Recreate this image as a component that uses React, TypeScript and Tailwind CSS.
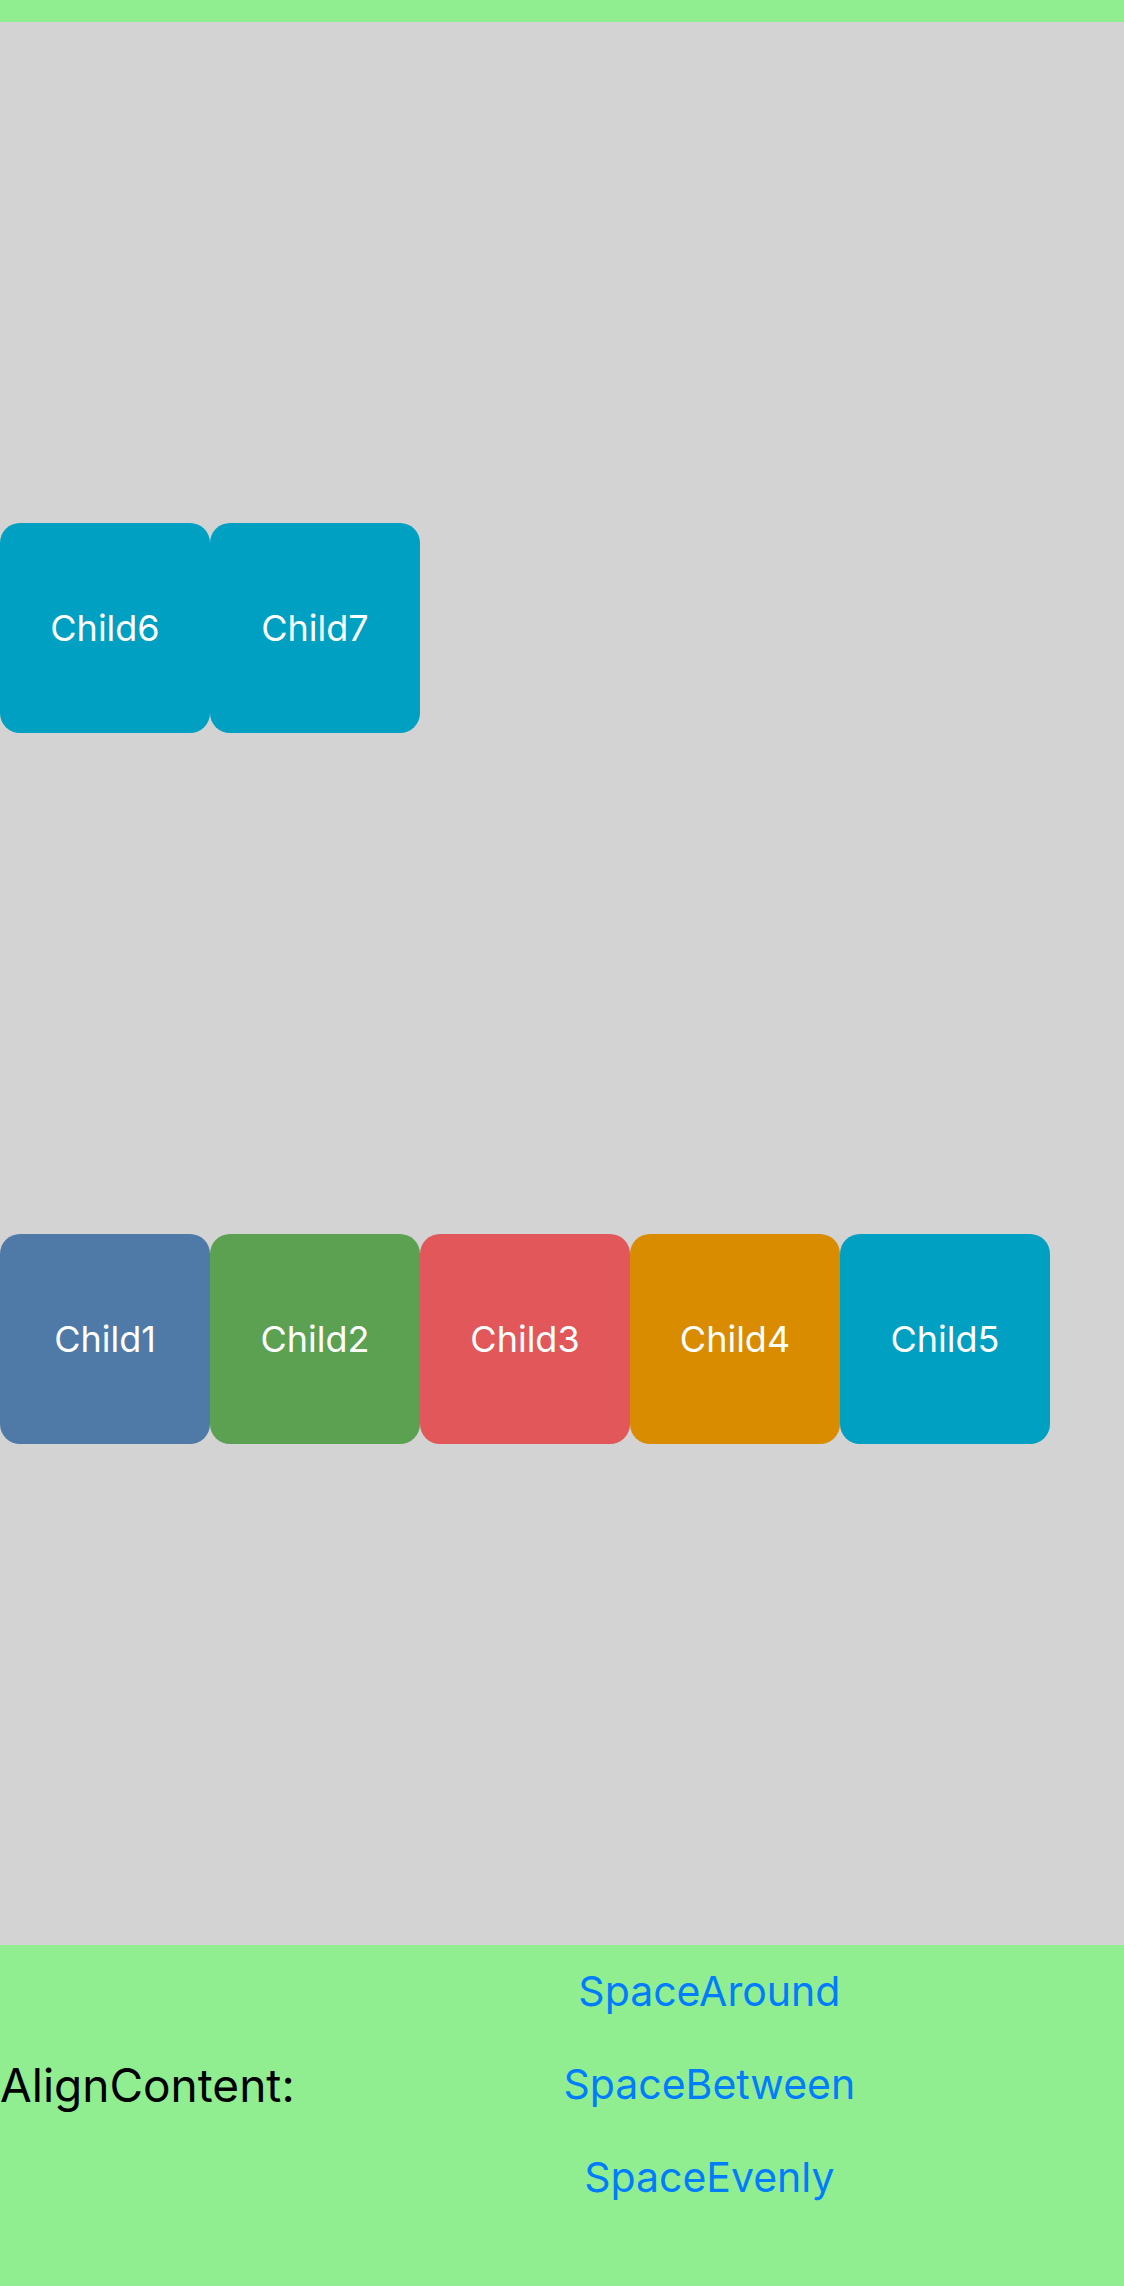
const boxes = [
  { label: "Child1", color: "bg-[#4f7aa7]" },
  { label: "Child2", color: "bg-[#5ba151]" },
  { label: "Child3", color: "bg-[#e1575a]" },
  { label: "Child4", color: "bg-[#d98c00]" },
  { label: "Child5", color: "bg-[#00a0c3]" },
  { label: "Child6", color: "bg-[#00a0c3]" },
  { label: "Child7", color: "bg-[#00a0c3]" },
];

const options = ["SpaceAround", "SpaceBetween", "SpaceEvenly"];

export default function App() {
  return (
    <div className="flex h-[2286px] w-[1124px] flex-col bg-[#90ee90] pt-[22px] font-['Inter',sans-serif]">
      {/* wrap-reverse + space-evenly puts the overflow row on top */}
      <div className="flex h-[1923px] flex-wrap-reverse content-evenly bg-[#d3d3d3]">
        {boxes.map((b) => (
          <div
            key={b.label}
            className={`flex h-[210px] w-[210px] items-center justify-center rounded-[20px] text-[36px] text-white ${b.color}`}
          >
            {b.label}
          </div>
        ))}
      </div>
      <div className="flex h-[341px] items-start">
        <div className="flex h-[279px] items-center">
          <span className="text-[46px] leading-none text-black">AlignContent:</span>
        </div>
        <div className="flex flex-1 flex-col items-center">
          {options.map((o) => (
            <button key={o} className="flex h-[93px] items-center text-[41px] text-[#007dff]">
              {o}
            </button>
          ))}
        </div>
      </div>
    </div>
  );
}
